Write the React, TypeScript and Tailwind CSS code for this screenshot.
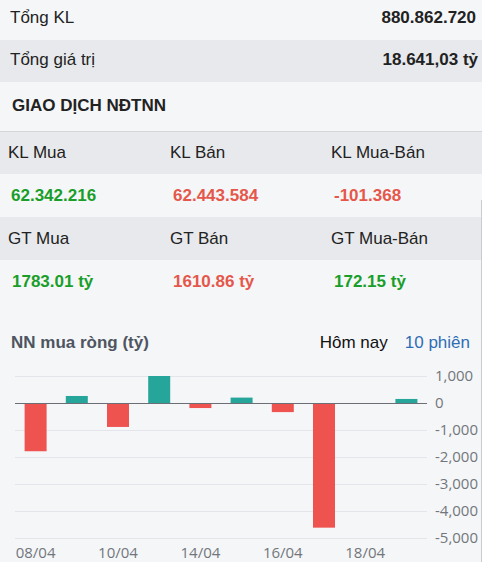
import React from "react";

const bars = [-1750, 260, -850, 1000, -150, 200, -300, -4580, 0, 150];
const dates = ["08/04", "10/04", "14/04", "16/04", "18/04"];
const ticks = [1000, 0, -1000, -2000, -3000, -4000, -5000];

const ZERO = 40;
const SCALE = 0.027;
const LEFT = 15;
const RIGHT = 427;
const SLOT = (RIGHT - LEFT) / 10;

const toY = (v: number) => ZERO - v * SCALE;

const NetChart = () => {
  return (
    <svg width="482" height="200" className="block">
      {ticks.map((t) => (
        <line
          key={t}
          x1={LEFT}
          x2={RIGHT}
          y1={toY(t) + 0.5}
          y2={toY(t) + 0.5}
          stroke={t === 0 ? "#6b6f75" : "#e3e5ea"}
          strokeWidth={1}
        />
      ))}
      {bars.map((v, i) => {
        if (v === 0) return null;
        const x = LEFT + SLOT * i + (SLOT - 22) / 2;
        const y = v > 0 ? toY(v) : ZERO + 1;
        const h = Math.abs(v) * SCALE;
        return (
          <rect
            key={i}
            x={x}
            y={y}
            width={22}
            height={h}
            fill={v > 0 ? "#26a69a" : "#ef5350"}
          />
        );
      })}
      {ticks.map((t) => (
        <text
          key={"l" + t}
          x={435}
          y={toY(t) + 5}
          fontSize={15}
          fill="#72767c"
          fontFamily="'Open Sans', sans-serif"
        >
          {t.toLocaleString("en-US")}
        </text>
      ))}
      {dates.map((d, i) => (
        <text
          key={d}
          x={LEFT + SLOT * (i * 2) + SLOT / 2}
          y={195}
          fontSize={15}
          fill="#72767c"
          textAnchor="middle"
          fontFamily="'Open Sans', sans-serif"
        >
          {d}
        </text>
      ))}
    </svg>
  );
};

export default function App() {
  return (
    <div className="relative w-[482px] h-[562px] overflow-hidden bg-[#f5f6f8] text-[17px] text-[#222] font-['Liberation_Sans',Arial,sans-serif]">
      <div className="flex h-[40px] items-center justify-between pl-[10px] pr-[6px] pb-[4px]">
        <span>Tổng KL</span>
        <span className="font-bold">880.862.720</span>
      </div>
      <div className="flex h-[42px] items-center justify-between bg-[#e7e9ec] pl-[10px] pr-[4px] pb-[2px]">
        <span>Tổng giá trị</span>
        <span className="font-bold">18.641,03 tỷ</span>
      </div>
      <div className="flex h-[49px] items-center pl-[12px] pb-[2px] font-bold">
        GIAO DỊCH NĐTNN
      </div>

      <div className="border-t border-[#d4d6da]">
        <div className="grid h-[42px] grid-cols-[162px_161px_1fr] items-center bg-[#e7e9ec] pl-[8px]">
          <span>KL Mua</span>
          <span>KL Bán</span>
          <span>KL Mua-Bán</span>
        </div>
        <div className="grid h-[43px] grid-cols-[162px_161px_1fr] items-center pl-[11px] font-bold">
          <span className="text-[#1a9e2a]">62.342.216</span>
          <span className="text-[#e5574b]">62.443.584</span>
          <span className="text-[#e5574b]">-101.368</span>
        </div>
        <div className="grid h-[43px] grid-cols-[162px_161px_1fr] items-center bg-[#e7e9ec] pl-[8px]">
          <span>GT Mua</span>
          <span>GT Bán</span>
          <span>GT Mua-Bán</span>
        </div>
        <div className="grid h-[43px] grid-cols-[161px_161px_1fr] items-center pl-[12px] font-bold">
          <span className="text-[#1a9e2a]">1783.01 tỷ</span>
          <span className="text-[#e5574b]">1610.86 tỷ</span>
          <span className="text-[#1a9e2a]">172.15 tỷ</span>
        </div>
      </div>

      <div className="mt-[28px] flex h-[24px] items-center justify-between pl-[11px] pr-[12px]">
        <span className="font-bold text-[#4e5560]">NN mua ròng (tỷ)</span>
        <div className="flex gap-[17px]">
          <span className="text-[#111]">Hôm nay</span>
          <span className="text-[#2f6db5]">10 phiên</span>
        </div>
      </div>

      <div className="mt-[8px]">
        <NetChart />
      </div>

      <div className="absolute bottom-0 right-0 top-[200px] w-px bg-[#c9cbcf]" />
    </div>
  );
}
